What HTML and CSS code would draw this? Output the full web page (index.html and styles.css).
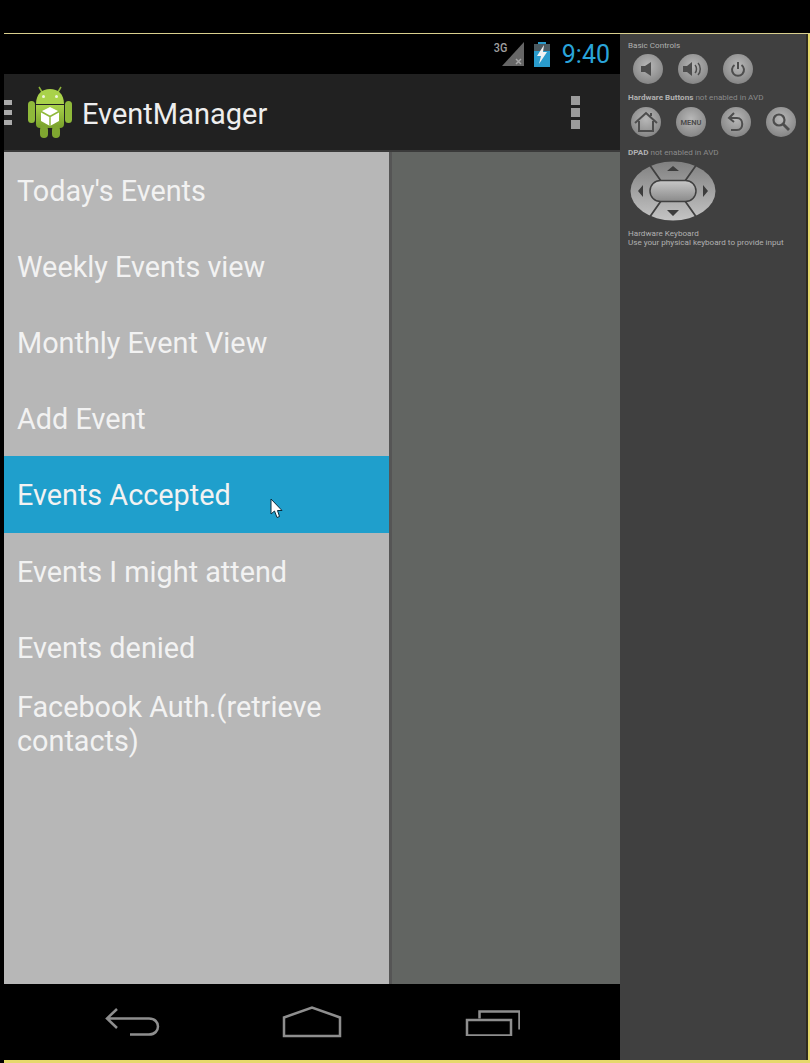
FILE: index.html
```html
<!DOCTYPE html>
<html>
    <head>
        <title>EventManager</title>
        <link rel="stylesheet" href="styles.css">
    </head>
    <body>
        <div id="emulator">
            <div id="device">
                <div id="status-bar">
                    <svg class="signal" width="30" height="26" viewBox="0 0 30 26">
                        <path d="M29 1V25H7Z" fill="#666"/>
                        <path d="M21 18l5 5M26 18l-5 5" stroke="#a8a8a8" stroke-width="1.5"/>
                    </svg>
                    <span class="net">3G</span>
                    <svg class="battery" width="18" height="25" viewBox="0 0 18 25">
                        <path d="M5 0H13V2H17V25H1V2H5Z" fill="#2a9bcc"/>
                        <path d="M1 2H17V9H1Z" fill="#4c5a60"/>
                        <path d="M11 3L4 14H8L6 22L14 10H10Z" fill="#f2f2f2"/>
                    </svg>
                    <span class="clock">9:40</span>
                </div>
                <div id="action-bar">
                    <div class="drawer-mark"><i></i><i></i><i></i></div>
                    <svg class="logo" width="44" height="52" viewBox="0 0 44 52">
                        <defs>
                            <linearGradient id="droid" x1="0" y1="0" x2="0" y2="1">
                                <stop offset="0" stop-color="#a9d24a"/>
                                <stop offset="1" stop-color="#78a02a"/>
                            </linearGradient>
                        </defs>
                        <path d="M14 6L11 1M30 6L33 1" stroke="#8db33a" stroke-width="1.5"/>
                        <path d="M8 18C8 8 14 3 22 3S36 8 36 18Z" fill="#a9d24a"/>
                        <circle cx="15.500" cy="10.500" r="1.500" fill="#eef5d8"/>
                        <circle cx="28.500" cy="10.500" r="1.500" fill="#eef5d8"/>
                        <path d="M8 19H36V38Q36 42 32 42H12Q8 42 8 38Z" fill="url(#droid)"/>
                        <rect x="0" y="15" width="7" height="22" rx="3.500" fill="#8fb93a"/>
                        <rect x="37" y="15" width="7" height="22" rx="3.500" fill="#8fb93a"/>
                        <rect x="12" y="40" width="8" height="12" rx="4" fill="#7fa630"/>
                        <rect x="24" y="40" width="8" height="12" rx="4" fill="#7fa630"/>
                        <path d="M22 21L31 25.500V35L22 40L13 35V25.500Z" fill="#fff"/>
                        <path d="M22 30.500L13 25.500M22 30.500L31 25.500M22 30.500V40" stroke="#8fb93a" stroke-width="1.500"/>
                    </svg>
                    <span class="app-title">EventManager</span>
                    <div class="overflow"><i></i><i></i><i></i></div>
                </div>
                <div id="content">
                    <ul id="drawer">
                        <li><span>Today's Events</span></li>
                        <li><span>Weekly Events view</span></li>
                        <li><span>Monthly Event View</span></li>
                        <li><span>Add Event</span></li>
                        <li class="active"><span>Events Accepted</span>
                            <svg class="cursor" width="13" height="21" viewBox="0 0 13 21">
                                <path d="M1 1V16L4.500 13L7 19.500L9.500 18.500L7.500 12.500H12Z" fill="#fff" stroke="#0c2c3c" stroke-width="1"/>
                            </svg>
                        </li>
                        <li><span>Events I might attend</span></li>
                        <li><span>Events denied</span></li>
                        <li class="wrap"><span>Facebook Auth.(retrieve contacts)</span></li>
                    </ul>
                    <div id="rest"></div>
                </div>
                <div id="nav-bar">
                    <svg width="56" height="30" viewBox="0 0 56 30">
                        <path d="M13 2L3 11.500L13 21M3 11.500H45C57 11.500 57 27.500 45 27.500H26" fill="none" stroke="#8e8e8e" stroke-width="2.500"/>
                    </svg>
                    <svg width="60" height="32" viewBox="0 0 60 32">
                        <path d="M2 11.500L30 1.500L58 11.500V30H2Z" fill="none" stroke="#8e8e8e" stroke-width="2.500"/>
                    </svg>
                    <svg width="56" height="28" viewBox="-1.500 -1.500 56 28">
                        <path d="M1.500 10.500H45.500V26H1.500Z" fill="none" stroke="#8e8e8e" stroke-width="2.500"/>
                        <path d="M14 9V2H54V20" fill="none" stroke="#8e8e8e" stroke-width="2.500"/>
                    </svg>
                </div>
            </div>
            <div id="panel">
                <div class="label strong">Basic Controls</div>
                <div class="btn-row first">
                    <div class="btn"><svg width="18" height="18" viewBox="0 0 18 18"><path d="M2 6H6L12 2V16L6 12H2Z" fill="#4d4d4d"/></svg></div>
                    <div class="btn"><svg width="22" height="18" viewBox="0 0 22 18"><path d="M1 6H5L10 2V16L5 12H1Z" fill="#4d4d4d"/><path d="M13 5C15 7 15 11 13 13M16 3C19 6 19 12 16 15" fill="none" stroke="#4d4d4d" stroke-width="1.500"/></svg></div>
                    <div class="btn"><svg width="18" height="18" viewBox="0 0 18 18"><path d="M5.500 5A6 6 0 1 0 12.500 5M9 2V9" fill="none" stroke="#4d4d4d" stroke-width="2"/></svg></div>
                </div>
                <div class="label"><b>Hardware Buttons</b> not enabled in AVD</div>
                <div class="btn-row second">
                    <div class="btn"><svg width="24" height="22" viewBox="0 0 24 22"><path d="M1 12L12 2L23 12M5 10V20H19V10M17 5V2" fill="none" stroke="#4d4d4d" stroke-width="2"/></svg></div>
                    <div class="btn"><span class="menu">MENU</span></div>
                    <div class="btn"><svg width="20" height="20" viewBox="0 0 20 20"><path d="M8 1L3 6L8 10M3 6H11C18 6 18 18 11 18H5" fill="none" stroke="#4d4d4d" stroke-width="2"/></svg></div>
                    <div class="btn"><svg width="20" height="20" viewBox="0 0 20 20"><circle cx="8" cy="8" r="5.500" fill="none" stroke="#4d4d4d" stroke-width="2.200"/><path d="M12 12L18 18" stroke="#4d4d4d" stroke-width="2.800"/></svg></div>
                </div>
                <div class="label"><b>DPAD</b> not enabled in AVD</div>
                <svg class="dpad" width="86" height="60" viewBox="0 0 86 60">
                    <defs>
                        <linearGradient id="pad" x1="0" y1="0" x2="0" y2="1">
                            <stop offset="0" stop-color="#808080"/>
                            <stop offset="1" stop-color="#c4c4c4"/>
                        </linearGradient>
                        <linearGradient id="pill" x1="0" y1="0" x2="0" y2="1">
                            <stop offset="0" stop-color="#c8c8c8"/>
                            <stop offset="1" stop-color="#8a8a8a"/>
                        </linearGradient>
                    </defs>
                    <ellipse cx="43" cy="30" rx="42.500" ry="29.500" fill="url(#pad)"/>
                    <path d="M19 3L31 20M67 3L55 20M19 57L31 40M67 57L55 40" stroke="#404040" stroke-width="1.800"/>
                    <rect x="20" y="19.500" width="46" height="21" rx="10.500" fill="url(#pill)" stroke="#404040" stroke-width="1.500"/>
                    <path d="M43 5L49 10H37ZM43 55L49 49H37ZM8 30L13 24V36ZM78 30L73 24V36Z" fill="#3c3c3c"/>
                </svg>
                <div class="label strong keyboard">Hardware Keyboard<br>Use your physical keyboard to provide input</div>
            </div>
        </div>
    </body>
</html>
```

FILE: styles.css
```css
html, body {
    margin: 0;
    height: 100%;
}

body {
    background-color: #000;
    padding-top: 33px;
    padding-left: 4px;
    box-sizing: border-box;
    font-family: Roboto, "Liberation Sans", sans-serif;
    overflow: hidden;
}

#emulator {
    display: flex;
    height: 1030px;
    background-color: #e6d96c;
    border-top: 1px solid #d9cf8e;
    padding-right: 2px;
    padding-bottom: 3px;
    box-sizing: border-box;
}

#device {
    display: flex;
    flex-direction: column;
    width: 616px;
}

/* status bar */
#status-bar {
    position: relative;
    display: flex;
    align-items: center;
    justify-content: flex-end;
    height: 40px;
    background-color: #000;
    padding-right: 10px;
    box-sizing: border-box;
}

.signal {
    margin-right: 8px;
}

.net {
    position: absolute;
    left: 489px;
    top: 7px;
    font-size: 12px;
    font-weight: 500;
    color: #a0a0a0;
    transform: scaleX(.9);
}

.battery {
    margin-right: 11px;
}

.clock {
    font-size: 25px;
    color: #2aa4d9;
}

/* action bar */
#action-bar {
    display: flex;
    align-items: center;
    height: 78px;
    background-color: #212121;
    border-bottom: 2px solid #3a3a3a;
    box-sizing: border-box;
}

.drawer-mark {
    display: flex;
    flex-direction: column;
    gap: 5px;
    width: 8px;
    margin-right: 16px;
}

.drawer-mark i {
    display: block;
    height: 5px;
    background-color: #aaa;
}

.logo {
    margin-right: 10px;
}

.app-title {
    font-size: 29px;
    color: #eee;
    flex: 1;
    margin-top: 4px;
}

.overflow {
    display: flex;
    flex-direction: column;
    gap: 3px;
    margin-right: 40px;
}

.overflow i {
    display: block;
    width: 9px;
    height: 9px;
    background-color: #9b9b9b;
}

/* list */
#content {
    display: flex;
    flex: 1;
}

#drawer {
    list-style-type: none;
    width: 385px;
    margin: 0;
    padding: 0;
    background-color: #b7b7b7;
}

#drawer li {
    position: relative;
    display: flex;
    align-items: center;
    height: 76.120px;
    padding: 2px 13px 0;
    font-size: 28.800px;
    line-height: 34px;
    color: #f2f2f2;
    box-sizing: border-box;
}

#drawer li.active {
    background-color: #1f9fcc;
}

.cursor {
    position: absolute;
    left: 266px;
    top: 42px;
}

#rest {
    flex: 1;
    background-color: #626562;
    border-left: 3px solid #555;
}

#nav-bar {
    display: grid;
    grid-template-columns: repeat(3, 180px);
    justify-items: center;
    align-items: center;
    height: 76px;
    padding-left: 38px;
    background-color: #000;
    box-sizing: border-box;
}

/* emulator controls */
#panel {
    flex: 1;
    background-color: #404040;
    padding: 7px 8px 0;
    border-right: 2px solid #2e2b20;
    box-sizing: border-box;
}

.label {
    font-size: 8.100px;
    line-height: 8px;
    white-space: nowrap;
    color: #8a8a8a;
}

.label b,
.strong {
    color: #b0b0b0;
}

.btn-row {
    display: flex;
    gap: 15px;
}

.btn-row.first {
    margin: 5px 0 9px 5px;
}

.btn-row.second {
    margin: 6px 0 11px 3px;
}

.btn {
    display: flex;
    align-items: center;
    justify-content: center;
    width: 30px;
    height: 30px;
    border-radius: 50%;
    background: radial-gradient(circle at 50% 40%, #b8b8b8, #8a8a8a 70%, #6e6e6e);
}

.menu {
    font-size: 7.500px;
    font-weight: 700;
    color: #4d4d4d;
}

.dpad {
    display: block;
    margin: 5px 0 8px 2px;
}

.keyboard {
    line-height: 9px;
}
```
